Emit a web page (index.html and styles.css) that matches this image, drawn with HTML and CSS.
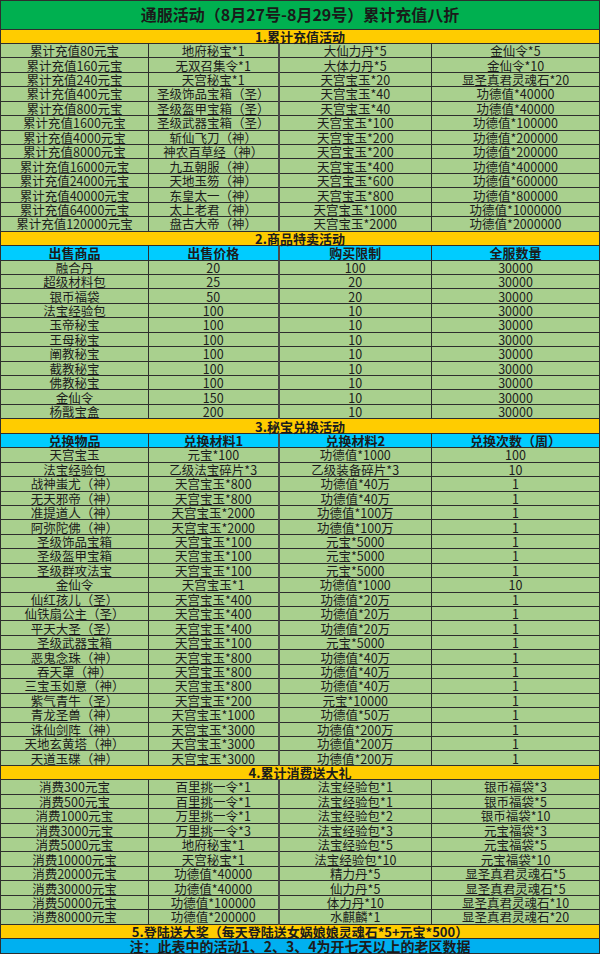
FILE: index.html
```html
<!DOCTYPE html>
<html lang="zh-CN">
<head>
<meta charset="utf-8">
<title>通服活动</title>
<link rel="stylesheet" href="styles.css">
</head>
<body>
<table class="sheet">
<colgroup><col class="c1"><col class="c2"><col class="c3"><col class="c4"></colgroup>
<tbody>
<tr class="title"><td colspan="4">通服活动（8月27号-8月29号）累计充值八折</td></tr>
<tr class="sec"><td colspan="4">1.累计充值活动</td></tr>
<tr><td>累计充值80元宝</td><td>地府秘宝*1</td><td>大仙力丹*5</td><td>金仙令*5</td></tr>
<tr><td>累计充值160元宝</td><td>无双召集令*1</td><td>大体力丹*5</td><td>金仙令*10</td></tr>
<tr><td>累计充值240元宝</td><td>天宫秘宝*1</td><td>天宫宝玉*20</td><td>显圣真君灵魂石*20</td></tr>
<tr><td>累计充值400元宝</td><td>圣级饰品宝箱（圣）</td><td>天宫宝玉*40</td><td>功德值*40000</td></tr>
<tr><td>累计充值800元宝</td><td>圣级盔甲宝箱（圣）</td><td>天宫宝玉*40</td><td>功德值*40000</td></tr>
<tr><td>累计充值1600元宝</td><td>圣级武器宝箱（圣）</td><td>天宫宝玉*100</td><td>功德值*100000</td></tr>
<tr><td>累计充值4000元宝</td><td>斩仙飞刀（神）</td><td>天宫宝玉*200</td><td>功德值*200000</td></tr>
<tr><td>累计充值8000元宝</td><td>神农百草经（神）</td><td>天宫宝玉*200</td><td>功德值*200000</td></tr>
<tr><td>累计充值16000元宝</td><td>九五朝服（神）</td><td>天宫宝玉*400</td><td>功德值*400000</td></tr>
<tr><td>累计充值24000元宝</td><td>天地玉笏（神）</td><td>天宫宝玉*600</td><td>功德值*600000</td></tr>
<tr><td>累计充值40000元宝</td><td>东皇太一（神）</td><td>天宫宝玉*800</td><td>功德值*800000</td></tr>
<tr><td>累计充值64000元宝</td><td>太上老君（神）</td><td>天宫宝玉*1000</td><td>功德值*1000000</td></tr>
<tr><td>累计充值120000元宝</td><td>盘古大帝（神）</td><td>天宫宝玉*2000</td><td>功德值*2000000</td></tr>
<tr class="sec"><td colspan="4">2.商品特卖活动</td></tr>
<tr class="head"><td>出售商品</td><td>出售价格</td><td>购买限制</td><td>全服数量</td></tr>
<tr><td>融合丹</td><td>20</td><td>100</td><td>30000</td></tr>
<tr><td>超级材料包</td><td>25</td><td>20</td><td>30000</td></tr>
<tr><td>银币福袋</td><td>50</td><td>20</td><td>30000</td></tr>
<tr><td>法宝经验包</td><td>100</td><td>10</td><td>30000</td></tr>
<tr><td>玉帝秘宝</td><td>100</td><td>10</td><td>30000</td></tr>
<tr><td>王母秘宝</td><td>100</td><td>10</td><td>30000</td></tr>
<tr><td>阐教秘宝</td><td>100</td><td>10</td><td>30000</td></tr>
<tr><td>截教秘宝</td><td>100</td><td>10</td><td>30000</td></tr>
<tr><td>佛教秘宝</td><td>100</td><td>10</td><td>30000</td></tr>
<tr><td>金仙令</td><td>150</td><td>10</td><td>30000</td></tr>
<tr><td>杨戬宝盒</td><td>200</td><td>10</td><td>30000</td></tr>
<tr class="sec"><td colspan="4">3.秘宝兑换活动</td></tr>
<tr class="head"><td>兑换物品</td><td>兑换材料1</td><td>兑换材料2</td><td>兑换次数（周）</td></tr>
<tr><td>天宫宝玉</td><td>元宝*100</td><td>功德值*1000</td><td>100</td></tr>
<tr><td>法宝经验包</td><td>乙级法宝碎片*3</td><td>乙级装备碎片*3</td><td>10</td></tr>
<tr><td>战神蚩尤（神）</td><td>天宫宝玉*800</td><td>功德值*40万</td><td>1</td></tr>
<tr><td>无天邪帝（神）</td><td>天宫宝玉*800</td><td>功德值*40万</td><td>1</td></tr>
<tr><td>准提道人（神）</td><td>天宫宝玉*2000</td><td>功德值*100万</td><td>1</td></tr>
<tr><td>阿弥陀佛（神）</td><td>天宫宝玉*2000</td><td>功德值*100万</td><td>1</td></tr>
<tr><td>圣级饰品宝箱</td><td>天宫宝玉*100</td><td>元宝*5000</td><td>1</td></tr>
<tr><td>圣级盔甲宝箱</td><td>天宫宝玉*100</td><td>元宝*5000</td><td>1</td></tr>
<tr><td>圣级群攻法宝</td><td>天宫宝玉*100</td><td>元宝*5000</td><td>1</td></tr>
<tr><td>金仙令</td><td>天宫宝玉*1</td><td>功德值*1000</td><td>10</td></tr>
<tr><td>仙红孩儿（圣）</td><td>天宫宝玉*400</td><td>功德值*20万</td><td>1</td></tr>
<tr><td>仙铁扇公主（圣）</td><td>天宫宝玉*400</td><td>功德值*20万</td><td>1</td></tr>
<tr><td>平天大圣（圣）</td><td>天宫宝玉*400</td><td>功德值*20万</td><td>1</td></tr>
<tr><td>圣级武器宝箱</td><td>天宫宝玉*100</td><td>元宝*5000</td><td>1</td></tr>
<tr><td>恶鬼念珠（神）</td><td>天宫宝玉*800</td><td>功德值*40万</td><td>1</td></tr>
<tr><td>吞天罩（神）</td><td>天宫宝玉*800</td><td>功德值*40万</td><td>1</td></tr>
<tr><td>三宝玉如意（神）</td><td>天宫宝玉*800</td><td>功德值*40万</td><td>1</td></tr>
<tr><td>紫气青牛（圣）</td><td>天宫宝玉*200</td><td>元宝*10000</td><td>1</td></tr>
<tr><td>青龙圣兽（神）</td><td>天宫宝玉*1000</td><td>功德值*50万</td><td>1</td></tr>
<tr><td>诛仙剑阵（神）</td><td>天宫宝玉*3000</td><td>功德值*200万</td><td>1</td></tr>
<tr><td>天地玄黄塔（神）</td><td>天宫宝玉*3000</td><td>功德值*200万</td><td>1</td></tr>
<tr><td>天道玉碟（神）</td><td>天宫宝玉*3000</td><td>功德值*200万</td><td>1</td></tr>
<tr class="sec"><td colspan="4">4.累计消费送大礼</td></tr>
<tr><td>消费300元宝</td><td>百里挑一令*1</td><td>法宝经验包*1</td><td>银币福袋*3</td></tr>
<tr><td>消费500元宝</td><td>百里挑一令*1</td><td>法宝经验包*1</td><td>银币福袋*5</td></tr>
<tr><td>消费1000元宝</td><td>万里挑一令*1</td><td>法宝经验包*2</td><td>银币福袋*10</td></tr>
<tr><td>消费3000元宝</td><td>万里挑一令*3</td><td>法宝经验包*3</td><td>元宝福袋*3</td></tr>
<tr><td>消费5000元宝</td><td>地府秘宝*1</td><td>法宝经验包*5</td><td>元宝福袋*5</td></tr>
<tr><td>消费10000元宝</td><td>天宫秘宝*1</td><td>法宝经验包*10</td><td>元宝福袋*10</td></tr>
<tr><td>消费20000元宝</td><td>功德值*40000</td><td>精力丹*5</td><td>显圣真君灵魂石*5</td></tr>
<tr><td>消费30000元宝</td><td>功德值*40000</td><td>仙力丹*5</td><td>显圣真君灵魂石*5</td></tr>
<tr><td>消费50000元宝</td><td>功德值*100000</td><td>体力丹*10</td><td>显圣真君灵魂石*10</td></tr>
<tr><td>消费80000元宝</td><td>功德值*200000</td><td>水麒麟*1</td><td>显圣真君灵魂石*20</td></tr>
<tr class="sec"><td colspan="4">5.登陆送大奖（每天登陆送女娲娘娘灵魂石*5+元宝*500）</td></tr>
<tr class="note"><td colspan="4">注：此表中的活动1、2、3、4为开七天以上的老区数据</td></tr>
</tbody>
</table>
</body>
</html>
```
FILE: styles.css
```css
html, body {
  margin: 0;
  padding: 0;
  background: #ffffff;
}

.sheet {
  border-collapse: collapse;
  table-layout: fixed;
  width: 599px;
  font-family: "Noto Sans CJK SC", sans-serif;
  font-size: 12.5px;
  color: #1c1c1c;
}

.c1 { width: 148px; }
.c2 { width: 130px; }
.c3 { width: 153px; }
.c4 { width: 168px; }

.sheet td {
  border: 1px solid #2e2e2e;
  padding: 0;
  height: 13.45px;
  line-height: 13px;
  text-align: center;
  white-space: nowrap;
  background: #a9d08e;
}

.sheet td:nth-child(2) {
  border-right: 2px solid #4a4a4a;
}

.sheet .title td {
  height: 27.5px;
  background: #00b050;
  font-size: 16px;
  font-weight: bold;
  line-height: 27px;
  color: #1a1a1a;
}

.sheet .sec td {
  background: #ffcc00;
  font-weight: bold;
  font-size: 13px;
}

.sheet .head td {
  background: #00ccff;
  font-weight: bold;
  font-size: 13px;
}

.sheet .note td {
  background: #00b0f0;
  font-weight: bold;
  font-size: 14px;
  height: 14px;
  line-height: 14px;
}
```
